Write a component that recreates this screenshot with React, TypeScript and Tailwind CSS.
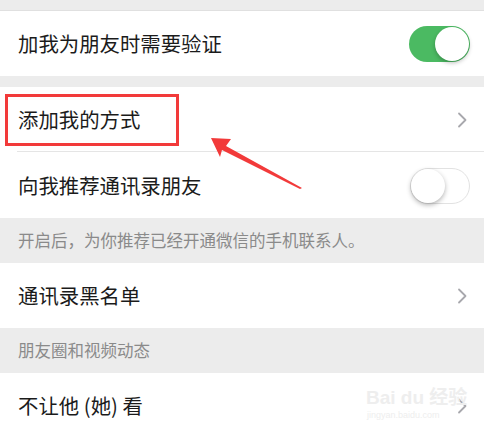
import React from 'react';

const font = { fontFamily: '"Noto Sans CJK SC", "Noto Sans", sans-serif' };

const Chevron = () => (
  <svg width="10" height="16" viewBox="0 0 10 16" className="shrink-0">
    <path d="M2 1.5 L8.5 8 L2 14.5" fill="none" stroke="#a8a8ad" strokeWidth="1.8" strokeLinecap="round" strokeLinejoin="round" />
  </svg>
);

const Toggle = ({ on }: { on: boolean }) =>
  on ? (
    <div className="w-[61px] h-[36px] rounded-full bg-[#4bba62] flex items-center justify-end p-[1px]">
      <div className="w-[34px] h-[34px] rounded-full bg-white shadow-[0_2px_4px_rgba(0,0,0,0.25)]" />
    </div>
  ) : (
    <div className="w-[60px] h-[36px] rounded-full bg-white border-[1.5px] border-[#e2e2e2] flex items-center justify-start">
      <div className="w-[34px] h-[34px] rounded-full bg-white shadow-[0_2px_5px_rgba(0,0,0,0.3)]" />
    </div>
  );

const Row = ({ label, right, divider }: { label: string; right: React.ReactNode; divider?: boolean }) => (
  <div className="relative bg-white h-[65px] flex items-center justify-between pl-[18px] pr-[14px]">
    <span className="text-[20.4px] text-[#1b1b1b] leading-none">{label}</span>
    {right}
    {divider && <div className="absolute left-[17px] right-0 bottom-0 h-px bg-[#e5e5e5]" />}
  </div>
);

export default function App() {
  return (
    <div className="relative w-[484px] h-[433px] overflow-hidden bg-[#ececec]" style={font}>
      <div className="h-[11px] border-b border-[#e0e0e0]" />
      <Row label="加我为朋友时需要验证" right={<Toggle on />} />
      <div className="h-[11px]" />
      <Row label="添加我的方式" right={<span className="pr-[3px]"><Chevron /></span>} divider />
      <div className="h-px bg-white" />
      <Row label="向我推荐通讯录朋友" right={<Toggle on={false} />} />
      <div className="h-[45px] flex items-center px-[18px] text-[16.5px] text-[#8a8a8a]">
        开启后，为你推荐已经开通微信的手机联系人。
      </div>
      <Row label="通讯录黑名单" right={<span className="pr-[3px]"><Chevron /></span>} />
      <div className="h-[45px] flex items-center px-[18px] text-[16.5px] text-[#8a8a8a]">
        朋友圈和视频动态
      </div>
      <Row label="不让他 (她) 看" right={<span className="pr-[3px]"><Chevron /></span>} />

      {/* annotation box */}
      <div className="absolute left-[5px] top-[94px] w-[174px] h-[52px] border-[3px] border-[#f23a3a]" />

      {/* annotation arrow */}
      <svg className="absolute left-0 top-0" width="484" height="433" viewBox="0 0 484 433">
        <polygon points="211,138 231,139 226,146 302,188 300,189 222,150 220,157" fill="#f23a3a" />
      </svg>

      {/* watermark */}
      <div className="absolute left-[366px] top-[388px] flex flex-col items-start text-[#eeeeee] leading-none">
        <span className="text-[19px] font-bold" style={{ fontFamily: '"Liberation Sans", "Noto Sans CJK SC", sans-serif' }}>
          Bai du 经验
        </span>
        <span className="text-[9px] mt-[4px] ml-[1px]" style={{ fontFamily: '"Liberation Sans", sans-serif' }}>
          jingyan.baidu.com
        </span>
      </div>
    </div>
  );
}
